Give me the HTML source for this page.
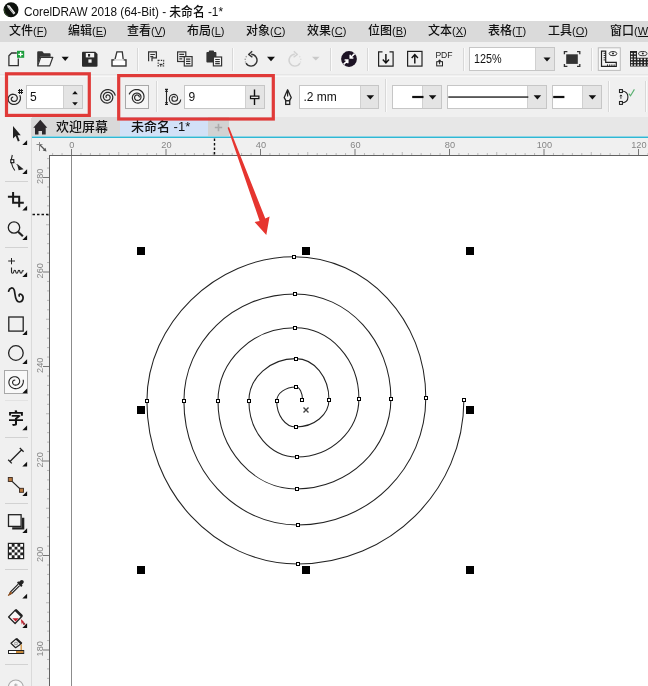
<!DOCTYPE html>
<html><head><meta charset="utf-8">
<style>
html,body{margin:0;padding:0;}
span,text{filter:grayscale(1)}
body{width:648px;height:686px;overflow:hidden;position:relative;background:#fff;font-family:"Liberation Sans","Noto Sans CJK SC",sans-serif;color:#000;}
.abs,.abs>*{position:absolute;}
#title{left:0;top:0;width:648px;height:21px;background:#fff;}
#title .t{font-weight:500;left:24px;top:1.500px;font-size:13px;line-height:19px;white-space:nowrap;color:#111;transform-origin:0 50%;transform:scaleX(.905);}
#menu{left:0;top:21px;width:648px;height:21px;background:#dadada;}
#menu span b{font-weight:inherit;font-size:11px;}
#menu span{top:0;font-weight:500;font-size:12px;line-height:21px;white-space:nowrap;color:#111;}
#tb1{left:0;top:42px;width:648px;height:32px;background:#f0f0f0;}
#tbsep{left:0;top:74px;width:648px;height:1px;background:#e6e6e6;box-shadow:0 2px 0 #fafafa;}
#tb2{left:0;top:75px;width:648px;height:43px;background:#f0f0f0;}
#tabs{left:32px;top:117px;width:616px;height:20px;background:#e7e7e7;}
#tabs .t1{left:0;top:0;width:88px;height:19px;background:#d9d9d9;}
#tabs .t2{left:88px;top:0;width:88px;height:19px;background:#d2e1f7;}
#tabs .t3{left:176px;top:0;width:21px;height:19px;background:#d2d2d2;}
#tabs span{top:0;font-weight:500;font-size:13px;line-height:20px;white-space:nowrap;color:#111;}
#tabline{left:32px;top:136px;width:616px;height:2px;background:#2fb8d4;border-top:1px solid #8fd4e4;box-sizing:border-box;}
#toolbox{left:0;top:118px;width:32px;height:568px;background:#f0f0f0;}
#rulerbg{left:32px;top:138px;width:616px;height:548px;background:#f0f0f0;}
#canvas{left:50px;top:156px;width:598px;height:530px;background:#fff;}
.inp{background:#fff;border:1px solid #c6c6c6;box-sizing:border-box;}
.inp .dd{right:0;top:0;bottom:0;background:#e4e4e4;border-left:1px solid #d0d0d0;}
.inp .tx{font-size:12px;line-height:22px;top:0;white-space:nowrap;color:#111;}
.vsep{width:1px;background:#d8d8d8;box-shadow:1px 0 0 #fafafa;}
.hsep{left:5px;width:23px;height:1px;background:#d2d2d2;}
svg{position:absolute;left:0;top:0;overflow:visible;}
</style></head><body>
<div id="title" class="abs">
<svg width="22" height="21" viewBox="0 0 22 21"><circle cx="11" cy="9.800" r="7.500" fill="#0d110d"/><path d="M7 5l2.600.600 5.800 7.300-1.900 1.600-5.800-7.200z" fill="#f2f2f2"/><path d="M8.300 6.600l5.400 6.800" stroke="#777" stroke-width=".7"/><path d="M4.500 8.500a6.500 6.500 0 0 0 4 7.500" stroke="#2c4a22" stroke-width="1" fill="none"/></svg>
<span class="t">CorelDRAW 2018 (64-Bit) - 未命名 -1*</span></div>
<div id="menu" class="abs">
<span style="left:9px">文件<b>(<u>F</u>)</b></span>
<span style="left:68px">编辑<b>(<u>E</u>)</b></span>
<span style="left:127px">查看<b>(<u>V</u>)</b></span>
<span style="left:187px">布局<b>(<u>L</u>)</b></span>
<span style="left:246px">对象<b>(<u>C</u>)</b></span>
<span style="left:307px">效果<b>(<u>C</u>)</b></span>
<span style="left:368px">位图<b>(<u>B</u>)</b></span>
<span style="left:428px">文本<b>(<u>X</u>)</b></span>
<span style="left:488px">表格<b>(<u>T</u>)</b></span>
<span style="left:548px">工具<b>(<u>O</u>)</b></span>
<span style="left:610px">窗口<b>(<u>W</u>)</b></span>
</div>
<div id="tb1" class="abs"></div>
<div id="tbsep" class="abs"></div>
<div id="tb2" class="abs"></div>
<div class="abs" style="left:0;top:76px;width:648px;height:1px;background:#f8f8f8"></div>
<div id="tabs" class="abs"><div class="t1"></div><div class="t2"></div><div class="t3"></div>
<span style="left:24px">欢迎屏幕</span><span style="left:99px">未命名 -1*</span></div>
<div id="tabline" class="abs"></div>
<div id="toolbox" class="abs"></div>
<div id="rulerbg" class="abs"></div>
<div id="canvas" class="abs"></div>

<svg width="648" height="686" viewBox="0 0 648 686" font-family="Liberation Sans, sans-serif">
<!-- new doc -->
<path d="M18.300 58.500V65.700H8.900V55.800L11.600 53H16.800" fill="#f5f5f5" stroke="#333" stroke-width="1.300" stroke-linejoin="miter"/>
<rect x="17" y="50.8" width="7.2" height="7" fill="#1e9e3e"/>
<path d="M20.6 52v4.6M18.3 54.3h4.6" stroke="#fff" stroke-width="1.3"/>
<!-- open -->
<path d="M37.2 66V52.2c0-.5.4-.9.9-.9h4.2l1.6 2h5.8c.5 0 .9.4.9.9v2.6h-10.2l-3 9.2z" fill="#333"/>
<path d="M40.7 57.3h12.1l-3.1 8.6H37.7z" fill="#f4f4f4" stroke="#333" stroke-width="1.2" stroke-linejoin="round"/>
<path d="M61.6 56.8h7.2l-3.6 4.1z" fill="#111"/>
<!-- save -->
<path d="M82 52.6c0-.5.4-.9.9-.9h12.3l2.3 2.3v11.8c0 .5-.4.9-.9.9H82.9c-.5 0-.9-.4-.9-.9z" fill="#2b2b2b"/>
<rect x="85.8" y="53" width="8.4" height="4.4" fill="#f4f4f4"/><rect x="88" y="54" width="2.1" height="2.6" fill="#2b2b2b"/>
<rect x="88.4" y="59.4" width="3.2" height="3.3" fill="#f4f4f4"/>
<!-- print -->
<path d="M114.6 61L116.9 51.9H122.3L123.4 61" fill="#fff" stroke="#333" stroke-width="1.3"/>
<rect x="112" y="59.9" width="14" height="6.1" fill="#fff" stroke="#333" stroke-width="1.4"/>
<path d="M114.3 60h9.4" stroke="#fff" stroke-width="1.6"/>
<!-- cut/copy/paste -->
<g fill="none" stroke="#333" stroke-width="1.2">
<path d="M148.6 61.2V51.9H156.4V57.8H152V61.2"/><path d="M150.3 54.5h4.6M150.3 56.6h3"/>
<rect x="158.2" y="60.4" width="5.4" height="5.4" stroke-dasharray="1.4 1.2"/><path d="M159.5 64.4h3"/>
<rect x="177.6" y="51.9" width="8.2" height="9.6" fill="#f4f4f4"/><path d="M179.3 54.4h4.8M179.3 56.6h4.8M179.3 58.8h3"/>
<rect x="184.3" y="56.6" width="7.8" height="9.4" fill="#f4f4f4"/><path d="M186 59.2h4.4M186 61.4h4.4M186 63.6h4.4"/>
</g>
<path d="M206.4 52.8c0-.4.4-.8.8-.8h1.6v-.6c0-.4.4-.8.8-.8h3.6c.4 0 .8.4.8.8v.6h1.6c.4 0 .8.4.8.8v9c0 .4-.4.8-.8.8h-8.400c-.4 0-.8-.4-.8-.8z" fill="#333"/>
<g fill="none" stroke="#333" stroke-width="1.2"><rect x="213.4" y="57" width="8.2" height="8.9" fill="#f4f4f4"/><path d="M215.200 59.500h4.600M215.200 61.600h4.600M215.200 63.700h4.600"/></g>
<!-- undo -->
<g fill="none" stroke="#333" stroke-width="1.4">
<path d="M251.200 54.300A5.900 5.900 0 1 1 246 63.200"/>
<path d="M252.200 51.200L248.600 54.400L252.400 57.300" stroke-linejoin="round"/>
</g>
<path d="M245.700 62.600A5.900 5.900 0 0 1 247.200 55.700" fill="none" stroke="#999" stroke-width="1.3" stroke-dasharray="1.2 1.5"/>
<path d="M267 56.800h8l-4 4.500z" fill="#111"/>
<!-- redo disabled -->
<g fill="none" stroke="#d2d2d2" stroke-width="1.400">
<path d="M294.800 54.300A5.900 5.900 0 1 0 300 63.200"/>
<path d="M293.800 51.200L297.400 54.400L293.600 57.300" stroke-linejoin="round"/>
</g>
<path d="M300.300 62.600A5.900 5.900 0 0 0 298.800 55.700" fill="none" stroke="#dcdcdc" stroke-width="1.300" stroke-dasharray="1.200 1.500"/>
<path d="M312 56.800h7.600l-3.800 3.800z" fill="#c9c9c9"/>
<!-- dark circle -->
<circle cx="349" cy="59" r="7.900" fill="#1c1224"/>
<g stroke="#fff" stroke-width="1.500" fill="none"><path d="M354.600 53.600L350.400 57.800M350.200 54.800v3.200h3.200"/><path d="M343.600 64.400L347.800 60.200M344.600 60h3.200v3.200"/></g>
<!-- import/export -->
<g fill="none" stroke="#222" stroke-width="1.200">
<path d="M382.500 51.900H378.600V66.100H393.100V51.900H389.500"/>
<rect x="407.600" y="51.400" width="14.400" height="14.700"/>
</g>
<g fill="none" stroke="#111" stroke-width="1.450"><path d="M385.900 54V62.500M382.800 59.600L385.900 62.900L389 59.600"/><path d="M414.800 63.500V55M411.700 57.900L414.800 54.600L417.900 57.900"/></g>
<text x="435.400" y="58.200" font-size="8.600" fill="#222">PDF</text>
<g fill="none" stroke="#222" stroke-width="1"><rect x="436.700" y="61.700" width="5.800" height="4.200"/><path d="M439.600 59.800v4.400M438 61.500l1.600-1.700 1.600 1.700"/></g>
<!-- fullscreen -->
<rect x="566.200" y="54.300" width="11.600" height="9.600" fill="#333"/>
<g fill="none" stroke="#333" stroke-width="1.300"><path d="M564.400 54.200V51.700H567.400M577 51.700H579.800V54.200M579.800 64V66.300H577M567.400 66.300H564.400V64"/></g>
<!-- ruler toggle -->
<rect x="598.300" y="47.800" width="22" height="22.600" fill="#f8f8f8" stroke="#bdbdbd" stroke-width="1"/>
<path d="M601.500 51.200H605.700V62.300H616.300V66.400H601.500Z" fill="#f4f4f4" stroke="#222" stroke-width="1.200"/>
<g stroke="#222" stroke-width=".9" fill="none"><path d="M603.600 53.300h2M603.600 55.500h2M603.600 57.700h2M603.600 59.900h2M607.500 64.400v2M609.700 64.400v2M611.900 64.400v2M614.100 64.400v2"/><ellipse cx="613" cy="53.600" rx="3.800" ry="2.100" fill="#fafafa"/></g><circle cx="613" cy="53.600" r="1" fill="#222"/>
<!-- grid -->
<path d="M630 51.100H637V57.800H648V66.600H630Z" fill="#222"/>
<g fill="#f4f4f4"><rect x="630.9" y="52.9" width="1.700" height="1.500"/><rect x="634.1" y="52.9" width="1.700" height="1.500"/><rect x="630.9" y="55.9" width="1.700" height="1.500"/><rect x="634.1" y="55.9" width="1.700" height="1.500"/><rect x="630.9" y="58.6" width="1.700" height="1.500"/><rect x="634.1" y="58.6" width="1.700" height="1.500"/><rect x="637.4" y="58.6" width="1.700" height="1.500"/><rect x="640.6" y="58.6" width="1.700" height="1.500"/><rect x="644.0" y="58.6" width="1.700" height="1.500"/><rect x="647.4" y="58.6" width="1.700" height="1.500"/><rect x="630.9" y="61.6" width="1.700" height="1.500"/><rect x="634.1" y="61.6" width="1.700" height="1.500"/><rect x="637.4" y="61.6" width="1.700" height="1.500"/><rect x="640.6" y="61.6" width="1.700" height="1.500"/><rect x="644.0" y="61.6" width="1.700" height="1.500"/><rect x="647.4" y="61.6" width="1.700" height="1.500"/><rect x="630.9" y="64.3" width="1.700" height="1.500"/><rect x="634.1" y="64.3" width="1.700" height="1.500"/><rect x="637.4" y="64.3" width="1.700" height="1.500"/><rect x="640.6" y="64.3" width="1.700" height="1.500"/><rect x="644.0" y="64.3" width="1.700" height="1.500"/><rect x="647.4" y="64.3" width="1.700" height="1.500"/></g>
<ellipse cx="642.800" cy="53.600" rx="4.200" ry="2.100" fill="#f4f4f4" stroke="#222" stroke-width=".9"/><circle cx="642.800" cy="53.600" r="1" fill="#222"/>
</svg>
<div class="abs">
<div class="vsep" style="left:137px;top:48px;height:23px"></div>
<div class="vsep" style="left:232px;top:48px;height:23px"></div>
<div class="vsep" style="left:330px;top:48px;height:23px"></div>
<div class="vsep" style="left:367px;top:48px;height:23px"></div>
<div class="vsep" style="left:463px;top:48px;height:23px"></div>
<div class="vsep" style="left:591px;top:48px;height:23px"></div>
<div class="inp abs" style="left:469px;top:47px;width:86px;height:24px"><span class="tx" style="left:4.200px;transform-origin:0 50%;transform:scaleX(.9)">125%</span><div class="dd" style="width:18px"></div>
<svg width="86" height="24" viewBox="0 0 86 24"><path d="M73.500 9.500h7l-3.500 4z" fill="#111"/></svg></div>
</div>


<div class="abs">
<div class="inp abs" style="left:26px;top:85px;width:57px;height:24px"><span class="tx" style="left:3px">5</span><div class="dd" style="width:18px"></div>
<svg width="57" height="24" viewBox="0 0 57 24"><path d="M45.2 8.200h5.600l-2.800-3.100zM45.200 16.300h5.600l-2.800 3.100z" fill="#111"/></svg></div>
<div class="abs" style="left:125px;top:85px;width:24px;height:24px;box-sizing:border-box;border:1px solid #a8a8a8;background:#f6f6f6"></div>
<div class="vsep" style="left:156px;top:81px;height:31px"></div>
<div class="inp abs" style="left:184px;top:85px;width:81px;height:24px"><span class="tx" style="left:3.500px">9</span><div class="dd" style="width:18px"></div></div>
<div class="inp abs" style="left:299px;top:85px;width:80px;height:24px"><span class="tx" style="left:3.500px">.2 mm</span><div class="dd" style="width:17px"></div></div>
<div class="vsep" style="left:385px;top:79px;height:33px"></div>
<div class="inp abs" style="left:392px;top:85px;width:50px;height:24px"><div class="dd" style="width:18px"></div></div>
<div class="inp abs" style="left:447px;top:85px;width:100px;height:24px"><div class="dd" style="width:18px"></div></div>
<div class="inp abs" style="left:552px;top:85px;width:50px;height:24px"><div class="dd" style="width:18px"></div></div>
<div class="vsep" style="left:608px;top:81px;height:31px"></div>
<div class="vsep" style="left:645px;top:81px;height:31px"></div>
</div>
<svg width="648" height="686" viewBox="0 0 648 686" font-family="Liberation Sans, sans-serif">
<g fill="none" stroke="#2a2a2a" stroke-width="1.250" stroke-linecap="butt">
<path d="M13.19 97.21L12.88 97.20L12.56 97.26L12.25 97.39L11.96 97.58L11.70 97.84L11.48 98.15L11.34 98.51L11.26 98.91L11.28 99.34L11.38 99.76L11.57 100.18L11.86 100.57L12.23 100.90L12.68 101.17L13.19 101.36L13.75 101.46L14.34 101.45L14.93 101.33L15.50 101.10L16.03 100.76L16.49 100.32L16.86 99.79L17.13 99.18L17.28 98.52L17.29 97.83L17.16 97.14L16.89 96.46L16.47 95.83L15.93 95.28L15.27 94.82L14.52 94.49L13.69 94.29L12.82 94.24L11.94 94.36L11.09 94.63L10.29 95.06L9.57 95.64L8.97 96.35L8.52 97.17L8.23 98.07L8.12 99.03L8.21 100.00L8.50 100.96L8.98 101.86L9.64 102.68L10.46 103.37L11.42 103.91L12.49 104.28L13.63 104.45L14.80 104.41L15.96 104.16L17.06 103.70L18.07 103.04L18.94 102.19L19.64 101.20L20.14 100.08L20.41 98.88L20.43 97.63L20.21 96.38L19.74 95.18"/>
<path d="M106.71 97.72L106.50 97.61L106.32 97.45L106.16 97.24L106.05 96.98L106.00 96.69L106.01 96.37L106.09 96.05L106.25 95.74L106.49 95.46L106.79 95.23L107.15 95.05L107.56 94.96L107.99 94.95L108.44 95.03L108.87 95.22L109.27 95.50L109.61 95.87L109.88 96.32L110.06 96.83L110.12 97.38L110.07 97.96L109.90 98.52L109.60 99.06L109.19 99.53L108.67 99.92L108.07 100.21L107.41 100.36L106.71 100.38L106.00 100.25L105.32 99.97L104.70 99.55L104.16 98.99L103.74 98.32L103.47 97.57L103.35 96.75L103.40 95.91L103.62 95.08L104.02 94.30L104.58 93.61L105.29 93.03L106.11 92.60L107.03 92.34L107.99 92.27L108.96 92.41L109.91 92.75L110.78 93.28L111.53 93.99L112.14 94.85L112.56 95.84L112.77 96.91L112.77 98.01L112.53 99.11L112.07 100.16L111.39 101.10L110.52 101.90L109.50 102.52L108.35 102.91L107.12 103.07L105.88 102.97L104.66 102.62L103.52 102.01L102.52 101.18L101.70 100.15L101.10 98.95L100.74 97.64L100.66 96.27L100.87 94.89L101.36 93.57L102.11 92.36L103.11 91.31L104.32 90.48L105.68 89.90L107.16 89.62L108.67 89.63L110.17 89.96L111.59 90.60L112.86 91.52L113.93 92.69L114.75 94.07L115.28 95.61" stroke-width="1.200"/>
<path d="M139.30 97.37L139.31 96.98L139.25 96.59L139.11 96.21L138.90 95.86L138.62 95.55L138.27 95.29L137.88 95.10L137.45 94.99L137.00 94.96L136.55 95.02L136.10 95.16L135.69 95.40L135.32 95.71L135.01 96.10L134.78 96.55L134.63 97.04L134.58 97.56L134.63 98.09L134.78 98.61L135.04 99.10L135.39 99.54L135.83 99.91L136.34 100.20L136.90 100.38L137.50 100.46L138.12 100.42L138.72 100.26L139.30 99.98L139.82 99.59L140.27 99.10L140.62 98.52L140.85 97.88L140.97 97.18L140.94 96.47L140.78 95.76L140.48 95.08L140.05 94.46L139.49 93.93L138.84 93.50L138.10 93.21L137.30 93.05L136.47 93.05L135.64 93.22L134.85 93.54L134.12 94.02L133.48 94.64L132.96 95.38L132.59 96.23L132.38 97.15L132.35 98.11L132.51 99.07L132.86 100.00L133.38 100.87L134.08 101.63L134.92 102.25L135.89 102.72L136.94 102.99L138.05 103.06L139.17 102.91L140.27 102.54L141.29 101.96L142.19 101.19L142.95 100.23L143.52 99.13L143.87 97.92L143.99 96.64L143.86 95.33L143.48 94.06L142.85 92.85L141.98 91.77L140.90 90.86L139.65 90.17L138.26 89.71L136.78 89.53L135.26 89.63L133.77 90.03L132.35 90.72L131.07 91.68L129.98 92.90L129.12 94.32" stroke-width="1.200"/>
<path d="M175.2 98C175.2 97 174.7 96.5 174.1 96.5C172.88 96.50 171.90 97.57 171.90 98.90C171.90 100.17 173.06 101.20 174.50 101.20C176.21 101.20 177.60 99.86 177.60 98.20C177.60 96.05 175.90 94.30 173.80 94.30C171.31 94.30 169.30 96.36 169.30 98.90C169.30 101.94 171.81 104.40 174.90 104.40C178.10 104.40 180.70 102.25 180.70 99.60" stroke-width="1.150"/>
</g>
<path d="M18 90.500h5M18 92.500h5M19.500 89v5M21.500 89v5" stroke="#1a1a1a" stroke-width="1" fill="none"/>
<path d="M166.500 89.500v14.800M165 89.400h3M165 104.400h3M165.200 91.400h2.600M165.200 102.500h2.600" stroke="#222" stroke-width="1.100" fill="none"/>
<!-- slider icon -->
<path d="M254.500 89.500v15.500" stroke="#111" stroke-width="1.400"/><rect x="250.500" y="96.100" width="8.400" height="2.500" fill="#e4e4e4" stroke="#111" stroke-width="1.200"/>
<!-- pen nib -->
<path d="M287.600 89.800L284.200 97.600L285.900 100.600H289.500L291.200 97.600Z" fill="#f4f4f4" stroke="#222" stroke-width="1.300" stroke-linejoin="round"/><path d="M287.600 90v6.500" stroke="#222" stroke-width="1.200"/>
<rect x="285.700" y="100.800" width="4" height="3.600" fill="#f4f4f4" stroke="#222" stroke-width="1.300"/>
<!-- dd arrows -->
<g fill="#111"><path d="M366.500 95.300h7.600l-3.800 4.200z"/><path d="M428.800 95.300h7.600l-3.800 4.200z"/><path d="M533.600 95.300h7.600l-3.800 4.200z"/><path d="M588.600 95.300h7.600l-3.800 4.200z"/></g>
<rect x="412.200" y="95.900" width="11.300" height="2.200" fill="#111"/>
<rect x="448.300" y="96.400" width="80" height="1.300" fill="#111"/>
<rect x="553.200" y="95.900" width="11.200" height="2.200" fill="#111"/>
<!-- close curve -->
<g fill="none" stroke="#222" stroke-width="1.100"><path d="M622.300 91C629.800 92 629.800 102 622.300 103"/><rect x="619.500" y="89.600" width="2.900" height="2.900" fill="#fff"/><rect x="619.500" y="101.500" width="2.900" height="2.900" fill="#fff"/><path d="M620.900 95v3.800M619.800 96.200l1.100-1.300 1.100 1.300" stroke-width=".9"/></g>
<path d="M628.800 93.700l1.700 2 3.900-6.300" fill="none" stroke="#5ab070" stroke-width="1.100"/>
</svg>


<div class="abs">
<div class="abs" style="left:4px;top:370px;width:24px;height:24px;box-sizing:border-box;border:1px solid #a8a8a8;background:#f9f9f9"></div>
<div class="hsep" style="top:181px"></div>
<div class="hsep" style="top:247px"></div>
<div class="hsep" style="top:400px;background:#e2e2e2"></div>
<div class="hsep" style="top:437px"></div>
<div class="hsep" style="top:503px"></div>
<div class="hsep" style="top:569px"></div>
<div class="hsep" style="top:664px"></div>
<div class="abs" style="left:31px;top:118px;width:1px;height:568px;background:#dadada"></div>
<span style="left:8px;top:408px;font-size:16px;line-height:22px;font-weight:bold;color:#111">字</span>
</div>
<svg width="648" height="686" viewBox="0 0 648 686">
<g fill="#111"><path d="M22.300 145.0H27.100V140.2Z"/><path d="M22.300 174.0H27.100V169.2Z"/><path d="M22.300 210.5H27.100V205.7Z"/><path d="M22.300 240.0H27.100V235.2Z"/><path d="M22.300 277.0H27.100V272.2Z"/><path d="M22.300 335.0H27.100V330.2Z"/><path d="M22.300 364.0H27.100V359.2Z"/><path d="M22.300 393.2H27.100V388.4Z"/><path d="M22.300 430.3H27.100V425.5Z"/><path d="M22.300 466.6H27.100V461.8Z"/><path d="M22.300 496.0H27.100V491.2Z"/><path d="M22.300 533.0H27.100V528.2Z"/><path d="M22.300 598.6H27.100V593.8Z"/><path d="M22.300 628.0H27.100V623.2Z"/></g>
<!-- pick -->
<path d="M13 126V138.400L15.700 135.900L17.900 141.500L19.700 140.700L17.500 135.300L20.800 135.200Z" fill="#222"/>
<!-- shape -->
<path d="M12.300 155C10.600 160 11.500 166 14.800 170.500" fill="none" stroke="#222" stroke-width="1.100"/>
<rect x="10.800" y="159.700" width="3" height="3" fill="#fff" stroke="#111" stroke-width="1.100"/>
<path d="M17 163.800L23.600 169.300L18.600 170.200Z" fill="#222"/><path d="M14.500 162.500L19 167" stroke="#555" stroke-width=".8" stroke-dasharray="1 1"/>
<!-- crop -->
<path d="M13.100 192.100V202.700H23.800M7.900 196.800H19.200V207.200" fill="none" stroke="#1a1a1a" stroke-width="2"/>
<!-- zoom -->
<circle cx="14" cy="227.500" r="5.700" fill="none" stroke="#222" stroke-width="1.300"/><path d="M18.100 231.800L22.900 236.300" stroke="#222" stroke-width="2.200"/>
<!-- freehand -->
<path d="M8.200 261H15M11.500 258V264.300" stroke="#222" stroke-width="1" fill="none"/>
<path d="M11.500 267.600V272c0 1.600 2 1.600 2.200 0c.3-2.300 1.900-2.300 2.100 0c.2 1.600 1.900 1.600 2.100 0c.3-2.200 1.900-2.200 2.100 0c.2 1.500 1.800 1.500 2 0c.2-1.400 1-1.600 1.600-1" fill="none" stroke="#222" stroke-width="1.100"/>
<!-- artistic -->
<path d="M8.600 291.200C9.400 287.600 13 286.800 14.200 290C15.400 293.600 14.600 302 19.200 302C23.400 302 24.200 296.600 21.600 294.600C20 293.400 18.600 294.600 19.200 296" fill="none" stroke="#1a1a1a" stroke-width="1.700" stroke-linecap="round"/>
<!-- rect / ellipse -->
<rect x="8.800" y="317" width="14.400" height="14.100" fill="none" stroke="#222" stroke-width="1.300"/>
<circle cx="15.900" cy="353" r="7.300" fill="none" stroke="#222" stroke-width="1.300"/>
<!-- spiral -->
<path d="M15.28 380.28L14.97 380.19L14.62 380.16L14.25 380.20L13.88 380.31L13.52 380.51L13.20 380.78L12.93 381.12L12.72 381.53L12.60 381.98L12.58 382.47L12.65 382.97L12.84 383.47L13.13 383.93L13.53 384.35L14.03 384.70L14.60 384.97L15.24 385.12L15.91 385.16L16.61 385.07L17.29 384.85L17.93 384.50L18.51 384.03L18.99 383.45L19.36 382.77L19.59 382.02L19.66 381.22L19.57 380.40L19.32 379.60L18.90 378.83L18.32 378.15L17.59 377.56L16.75 377.11L15.81 376.81L14.80 376.69L13.77 376.75L12.75 376.99L11.78 377.43L10.90 378.04L10.14 378.82L9.54 379.73L9.12 380.76L8.91 381.86L8.92 383.00L9.17 384.14L9.64 385.23L10.34 386.23L11.23 387.10L12.30 387.81L13.51 388.32L14.82 388.61L16.19 388.67L17.56 388.47L18.89 388.02L20.12 387.34L21.22 386.43L22.12 385.33L22.80 384.06L23.22 382.68L23.37 381.23L23.22 379.76" fill="none" stroke="#222" stroke-width="1.100"/>
<!-- dimension -->
<path d="M10 461.500L21.700 449.800M8.200 459.700L11.800 463.400M19.800 448L23.600 451.700" fill="none" stroke="#222" stroke-width="1.300"/>
<!-- connector -->
<path d="M10.300 479.600L21.600 490.400" stroke="#222" stroke-width="1.300"/>
<rect x="8.300" y="477.500" width="4" height="4" fill="#b9793f" stroke="#3a2a20" stroke-width=".9"/><rect x="19.500" y="488.300" width="4" height="4" fill="#b9793f" stroke="#3a2a20" stroke-width=".9"/>
<!-- shadow -->
<path d="M12.200 528.400H23.100V517.800" fill="none" stroke="#222" stroke-width="2.400"/>
<rect x="8.500" y="514.700" width="12.600" height="11.700" fill="#f4f4f4" stroke="#222" stroke-width="1.300"/>
<!-- transparency -->
<rect x="8.400" y="543.400" width="15.200" height="15.200" fill="#fff" stroke="#222" stroke-width="1.200"/>
<g fill="#222"><rect x="11.74" y="543.90" width="2.84" height="2.84"/><rect x="17.42" y="543.90" width="2.84" height="2.84"/><rect x="8.90" y="546.74" width="2.84" height="2.84"/><rect x="14.58" y="546.74" width="2.84" height="2.84"/><rect x="20.26" y="546.74" width="2.84" height="2.84"/><rect x="11.74" y="549.58" width="2.84" height="2.84"/><rect x="17.42" y="549.58" width="2.84" height="2.84"/><rect x="8.90" y="552.42" width="2.84" height="2.84"/><rect x="14.58" y="552.42" width="2.84" height="2.84"/><rect x="20.26" y="552.42" width="2.84" height="2.84"/><rect x="11.74" y="555.26" width="2.84" height="2.84"/><rect x="17.42" y="555.26" width="2.84" height="2.84"/></g>
<!-- eyedropper -->
<path d="M18.200 584.200L10.600 591.800L9.400 594.400L12 593.200L19.600 585.600" fill="#fff" stroke="#222" stroke-width="1.200"/>
<path d="M17 582.800L21.200 587L22.600 585.600L21.800 584.800C23.800 583.400 24.400 581.800 23.200 580.600C22 579.400 20.400 580 19 582L18.200 581.200Z" fill="#222"/>
<path d="M8.300 595.600L10.600 591.800L12 593.200Z" fill="#9a5520" stroke="#9a5520" stroke-width=".8"/>
<!-- interactive fill -->
<path d="M15.500 609.900L22 616.300L15.100 623.500L8.600 617Z" fill="#f6f6f6" stroke="#222" stroke-width="1.300" stroke-linejoin="round"/>
<path d="M15.500 609.900L22 616.300" stroke="#222" stroke-width="2.600"/>
<path d="M12.400 618.200H18.800L15.600 621.600Z" fill="#c41f2c"/>
<path d="M20.800 619L23.600 621.600L21.800 624.400Z" fill="#c41f2c"/><path d="M23.400 621.500L25.800 624.500L23 624.800Z" fill="#8e1620"/>
<!-- smart fill -->
<path d="M16.300 638.800L21.500 643.600L15.600 647.700L11 643.200Z" fill="#fff" stroke="#222" stroke-width="1.200" stroke-linejoin="round"/>
<path d="M16.300 638.800L21.500 643.600" stroke="#222" stroke-width="2.200"/>
<path d="M14.300 643.500a1.700 1.400 0 1 0 3.400 0a1.700 1.400 0 1 0-3.400 0" fill="#e4e4e4" stroke="#666" stroke-width=".6"/>
<path d="M21.200 644.500V650" stroke="#d0903a" stroke-width="1.300"/>
<rect x="8.500" y="650.500" width="15.200" height="3" fill="#fff" stroke="#222" stroke-width="1"/><rect x="16" y="651" width="7.200" height="2" fill="#c98a3a"/>
<!-- bottom partial -->
<circle cx="15.800" cy="687.500" r="7.500" fill="#f8f8f8" stroke="#aaa" stroke-width="1.100"/><path d="M15.800 683.500v3M14 685h3.600" stroke="#aaa" stroke-width="1"/>
<!-- home -->
<path d="M40.300 119.800L47.300 127.800H45.700V134.600H42V131H38.500V134.600H35V127.800H33.300Z" fill="#2c282c"/>
<path d="M214.800 127.500h7.400M218.500 123.800v7.400" stroke="#aaa" stroke-width="1.600"/>
</svg>


<!-- rulers -->
<svg width="648" height="686" viewBox="0 0 648 686" font-family="Liberation Sans, sans-serif" font-size="9.200" fill="#858585">
<g fill="#606060">
<rect x="49" y="155" width="599" height="1"/>
<rect x="49" y="155" width="1" height="531"/>
</g>
<rect x="71" y="156" width="1" height="530" fill="#8c8c8c"/>
<g fill="#777"><rect x="52.10" y="153.0" width="1" height="2" fill="#b8b8b8"/><rect x="61.55" y="153.0" width="1" height="2" fill="#b8b8b8"/><rect x="71.00" y="149.0" width="1" height="6" fill="#777"/><rect x="80.45" y="153.0" width="1" height="2" fill="#b8b8b8"/><rect x="89.90" y="153.0" width="1" height="2" fill="#b8b8b8"/><rect x="99.35" y="153.0" width="1" height="2" fill="#b8b8b8"/><rect x="108.80" y="153.0" width="1" height="2" fill="#b8b8b8"/><rect x="118.25" y="152.0" width="1" height="3" fill="#b8b8b8"/><rect x="127.70" y="153.0" width="1" height="2" fill="#b8b8b8"/><rect x="137.15" y="153.0" width="1" height="2" fill="#b8b8b8"/><rect x="146.60" y="153.0" width="1" height="2" fill="#b8b8b8"/><rect x="156.05" y="153.0" width="1" height="2" fill="#b8b8b8"/><rect x="165.50" y="149.0" width="1" height="6" fill="#777"/><rect x="174.95" y="153.0" width="1" height="2" fill="#b8b8b8"/><rect x="184.40" y="153.0" width="1" height="2" fill="#b8b8b8"/><rect x="193.85" y="153.0" width="1" height="2" fill="#b8b8b8"/><rect x="203.30" y="153.0" width="1" height="2" fill="#b8b8b8"/><rect x="212.75" y="152.0" width="1" height="3" fill="#b8b8b8"/><rect x="222.20" y="153.0" width="1" height="2" fill="#b8b8b8"/><rect x="231.65" y="153.0" width="1" height="2" fill="#b8b8b8"/><rect x="241.10" y="153.0" width="1" height="2" fill="#b8b8b8"/><rect x="250.55" y="153.0" width="1" height="2" fill="#b8b8b8"/><rect x="260.00" y="149.0" width="1" height="6" fill="#777"/><rect x="269.45" y="153.0" width="1" height="2" fill="#b8b8b8"/><rect x="278.90" y="153.0" width="1" height="2" fill="#b8b8b8"/><rect x="288.35" y="153.0" width="1" height="2" fill="#b8b8b8"/><rect x="297.80" y="153.0" width="1" height="2" fill="#b8b8b8"/><rect x="307.25" y="152.0" width="1" height="3" fill="#b8b8b8"/><rect x="316.70" y="153.0" width="1" height="2" fill="#b8b8b8"/><rect x="326.15" y="153.0" width="1" height="2" fill="#b8b8b8"/><rect x="335.60" y="153.0" width="1" height="2" fill="#b8b8b8"/><rect x="345.05" y="153.0" width="1" height="2" fill="#b8b8b8"/><rect x="354.50" y="149.0" width="1" height="6" fill="#777"/><rect x="363.95" y="153.0" width="1" height="2" fill="#b8b8b8"/><rect x="373.40" y="153.0" width="1" height="2" fill="#b8b8b8"/><rect x="382.85" y="153.0" width="1" height="2" fill="#b8b8b8"/><rect x="392.30" y="153.0" width="1" height="2" fill="#b8b8b8"/><rect x="401.75" y="152.0" width="1" height="3" fill="#b8b8b8"/><rect x="411.20" y="153.0" width="1" height="2" fill="#b8b8b8"/><rect x="420.65" y="153.0" width="1" height="2" fill="#b8b8b8"/><rect x="430.10" y="153.0" width="1" height="2" fill="#b8b8b8"/><rect x="439.55" y="153.0" width="1" height="2" fill="#b8b8b8"/><rect x="449.00" y="149.0" width="1" height="6" fill="#777"/><rect x="458.45" y="153.0" width="1" height="2" fill="#b8b8b8"/><rect x="467.90" y="153.0" width="1" height="2" fill="#b8b8b8"/><rect x="477.35" y="153.0" width="1" height="2" fill="#b8b8b8"/><rect x="486.80" y="153.0" width="1" height="2" fill="#b8b8b8"/><rect x="496.25" y="152.0" width="1" height="3" fill="#b8b8b8"/><rect x="505.70" y="153.0" width="1" height="2" fill="#b8b8b8"/><rect x="515.15" y="153.0" width="1" height="2" fill="#b8b8b8"/><rect x="524.60" y="153.0" width="1" height="2" fill="#b8b8b8"/><rect x="534.05" y="153.0" width="1" height="2" fill="#b8b8b8"/><rect x="543.50" y="149.0" width="1" height="6" fill="#777"/><rect x="552.95" y="153.0" width="1" height="2" fill="#b8b8b8"/><rect x="562.40" y="153.0" width="1" height="2" fill="#b8b8b8"/><rect x="571.85" y="153.0" width="1" height="2" fill="#b8b8b8"/><rect x="581.30" y="153.0" width="1" height="2" fill="#b8b8b8"/><rect x="590.75" y="152.0" width="1" height="3" fill="#b8b8b8"/><rect x="600.20" y="153.0" width="1" height="2" fill="#b8b8b8"/><rect x="609.65" y="153.0" width="1" height="2" fill="#b8b8b8"/><rect x="619.10" y="153.0" width="1" height="2" fill="#b8b8b8"/><rect x="628.55" y="153.0" width="1" height="2" fill="#b8b8b8"/><rect x="638.00" y="149.0" width="1" height="6" fill="#777"/><rect x="647.45" y="153.0" width="1" height="2" fill="#b8b8b8"/></g>
<g fill="#777"><rect x="47" y="158.10" width="2" height="1" fill="#b8b8b8"/><rect x="47" y="167.55" width="2" height="1" fill="#b8b8b8"/><rect x="43" y="177.00" width="6" height="1" fill="#777"/><rect x="47" y="186.45" width="2" height="1" fill="#b8b8b8"/><rect x="47" y="195.90" width="2" height="1" fill="#b8b8b8"/><rect x="47" y="205.35" width="2" height="1" fill="#b8b8b8"/><rect x="47" y="214.80" width="2" height="1" fill="#b8b8b8"/><rect x="46" y="224.25" width="3" height="1" fill="#b8b8b8"/><rect x="47" y="233.70" width="2" height="1" fill="#b8b8b8"/><rect x="47" y="243.15" width="2" height="1" fill="#b8b8b8"/><rect x="47" y="252.60" width="2" height="1" fill="#b8b8b8"/><rect x="47" y="262.05" width="2" height="1" fill="#b8b8b8"/><rect x="43" y="271.50" width="6" height="1" fill="#777"/><rect x="47" y="280.95" width="2" height="1" fill="#b8b8b8"/><rect x="47" y="290.40" width="2" height="1" fill="#b8b8b8"/><rect x="47" y="299.85" width="2" height="1" fill="#b8b8b8"/><rect x="47" y="309.30" width="2" height="1" fill="#b8b8b8"/><rect x="46" y="318.75" width="3" height="1" fill="#b8b8b8"/><rect x="47" y="328.20" width="2" height="1" fill="#b8b8b8"/><rect x="47" y="337.65" width="2" height="1" fill="#b8b8b8"/><rect x="47" y="347.10" width="2" height="1" fill="#b8b8b8"/><rect x="47" y="356.55" width="2" height="1" fill="#b8b8b8"/><rect x="43" y="366.00" width="6" height="1" fill="#777"/><rect x="47" y="375.45" width="2" height="1" fill="#b8b8b8"/><rect x="47" y="384.90" width="2" height="1" fill="#b8b8b8"/><rect x="47" y="394.35" width="2" height="1" fill="#b8b8b8"/><rect x="47" y="403.80" width="2" height="1" fill="#b8b8b8"/><rect x="46" y="413.25" width="3" height="1" fill="#b8b8b8"/><rect x="47" y="422.70" width="2" height="1" fill="#b8b8b8"/><rect x="47" y="432.15" width="2" height="1" fill="#b8b8b8"/><rect x="47" y="441.60" width="2" height="1" fill="#b8b8b8"/><rect x="47" y="451.05" width="2" height="1" fill="#b8b8b8"/><rect x="43" y="460.50" width="6" height="1" fill="#777"/><rect x="47" y="469.95" width="2" height="1" fill="#b8b8b8"/><rect x="47" y="479.40" width="2" height="1" fill="#b8b8b8"/><rect x="47" y="488.85" width="2" height="1" fill="#b8b8b8"/><rect x="47" y="498.30" width="2" height="1" fill="#b8b8b8"/><rect x="46" y="507.75" width="3" height="1" fill="#b8b8b8"/><rect x="47" y="517.20" width="2" height="1" fill="#b8b8b8"/><rect x="47" y="526.65" width="2" height="1" fill="#b8b8b8"/><rect x="47" y="536.10" width="2" height="1" fill="#b8b8b8"/><rect x="47" y="545.55" width="2" height="1" fill="#b8b8b8"/><rect x="43" y="555.00" width="6" height="1" fill="#777"/><rect x="47" y="564.45" width="2" height="1" fill="#b8b8b8"/><rect x="47" y="573.90" width="2" height="1" fill="#b8b8b8"/><rect x="47" y="583.35" width="2" height="1" fill="#b8b8b8"/><rect x="47" y="592.80" width="2" height="1" fill="#b8b8b8"/><rect x="46" y="602.25" width="3" height="1" fill="#b8b8b8"/><rect x="47" y="611.70" width="2" height="1" fill="#b8b8b8"/><rect x="47" y="621.15" width="2" height="1" fill="#b8b8b8"/><rect x="47" y="630.60" width="2" height="1" fill="#b8b8b8"/><rect x="47" y="640.05" width="2" height="1" fill="#b8b8b8"/><rect x="43" y="649.50" width="6" height="1" fill="#777"/><rect x="47" y="658.95" width="2" height="1" fill="#b8b8b8"/><rect x="47" y="668.40" width="2" height="1" fill="#b8b8b8"/><rect x="47" y="677.85" width="2" height="1" fill="#b8b8b8"/><rect x="47" y="687.30" width="2" height="1" fill="#b8b8b8"/></g>
<text x="71.9" y="148" text-anchor="middle">0</text><text x="166.4" y="148" text-anchor="middle">20</text><text x="260.9" y="148" text-anchor="middle">40</text><text x="355.4" y="148" text-anchor="middle">60</text><text x="449.9" y="148" text-anchor="middle">80</text><text x="544.4" y="148" text-anchor="middle">100</text><text x="638.9" y="148" text-anchor="middle">120</text>
<text transform="translate(42.600 176.3) rotate(-90)" text-anchor="middle">280</text><text transform="translate(42.600 270.8) rotate(-90)" text-anchor="middle">260</text><text transform="translate(42.600 365.3) rotate(-90)" text-anchor="middle">240</text><text transform="translate(42.600 459.8) rotate(-90)" text-anchor="middle">220</text><text transform="translate(42.600 554.3) rotate(-90)" text-anchor="middle">200</text><text transform="translate(42.600 648.8) rotate(-90)" text-anchor="middle">180</text>
<g stroke="#111" stroke-width="1.4" stroke-dasharray="2.5 2" fill="none"><path d="M214.500 138.500V155"/><path d="M32.500 214.500H49"/></g>
<g stroke="#8a8a8a" stroke-width="1" fill="none"><path d="M36.500 144.500h6M39.500 142v9"/><path d="M40 145l5 5" stroke="#555" stroke-width="1.300"/></g><path d="M46.500 151.500l-3.800-1 2.800-2.800z" fill="#555"/>
</svg>

<!-- drawing -->
<svg width="648" height="686" viewBox="0 0 648 686">
<path d="M302.5 399.8C302.5 392.7 299.6 387.0 296.0 387.0C285.3 387.0 276.7 393.3 276.7 401.1C276.7 415.4 285.3 427.0 295.8 427.0C314.1 427.0 329.0 414.8 329.0 399.8C329.0 377.0 314.1 358.6 295.8 358.6C269.9 358.6 248.9 377.6 248.9 401.1C248.9 432.0 270.3 457.0 296.7 457.0C331.1 457.0 358.9 430.9 358.9 398.6C358.9 359.5 330.3 327.8 295.0 327.8C252.5 327.8 218.0 360.6 218.0 401.1C218.0 449.6 253.2 488.9 296.7 488.9C348.7 488.9 390.9 448.5 390.9 398.6C390.9 340.8 348.0 293.9 295.0 293.9C233.6 293.9 183.9 341.9 183.9 401.1C183.9 469.5 234.9 525.0 297.8 525.0C368.5 525.0 425.8 468.1 425.8 397.8C425.8 319.9 366.7 256.7 293.9 256.7C215.5 256.7 146.9 324.1 146.9 401.1C146.9 491.0 214.5 563.9 297.8 563.9C389.5 563.9 463.9 490.4 463.9 399.8" fill="none" stroke="#222" stroke-width="1.050"/>
<g fill="#fff" stroke="#000" stroke-width="1"><rect x="300.5" y="398.5" width="3" height="3"/><rect x="294.5" y="385.5" width="3" height="3"/><rect x="275.5" y="399.5" width="3" height="3"/><rect x="294.5" y="425.5" width="3" height="3"/><rect x="327.5" y="398.5" width="3" height="3"/><rect x="294.5" y="357.5" width="3" height="3"/><rect x="247.5" y="399.5" width="3" height="3"/><rect x="295.5" y="455.5" width="3" height="3"/><rect x="357.5" y="397.5" width="3" height="3"/><rect x="293.5" y="326.5" width="3" height="3"/><rect x="216.5" y="399.5" width="3" height="3"/><rect x="295.5" y="487.5" width="3" height="3"/><rect x="389.5" y="397.5" width="3" height="3"/><rect x="293.5" y="292.5" width="3" height="3"/><rect x="182.5" y="399.5" width="3" height="3"/><rect x="296.5" y="523.5" width="3" height="3"/><rect x="424.5" y="396.5" width="3" height="3"/><rect x="292.5" y="255.5" width="3" height="3"/><rect x="145.5" y="399.5" width="3" height="3"/><rect x="296.5" y="562.5" width="3" height="3"/><rect x="462.5" y="398.5" width="3" height="3"/></g>
<g fill="#000"><rect x="137" y="247" width="8" height="8"/><rect x="302" y="247" width="8" height="8"/><rect x="466" y="247" width="8" height="8"/><rect x="137" y="406" width="8" height="8"/><rect x="466" y="406" width="8" height="8"/><rect x="137" y="566" width="8" height="8"/><rect x="302" y="566" width="8" height="8"/><rect x="466" y="566" width="8" height="8"/></g>
<path d="M303.5 407.5l5 5m0-5l-5 5" stroke="#444" stroke-width="1.4" fill="none"/>
</svg>

<!-- annotations -->
<svg width="648" height="686" viewBox="0 0 648 686">
<g fill="none" stroke="#e03a38" stroke-width="3.200">
<rect x="6.500" y="73.800" width="82.800" height="41.600"/>
<rect x="118.700" y="75.600" width="154.600" height="43.400"/>
</g>
<path d="M227.600 127.700L259.600 220.900L254.600 222L266.300 235L269.600 216.500L265.300 218.400L229 127.100Z" fill="#e6352f"/>
</svg>
</body></html>
